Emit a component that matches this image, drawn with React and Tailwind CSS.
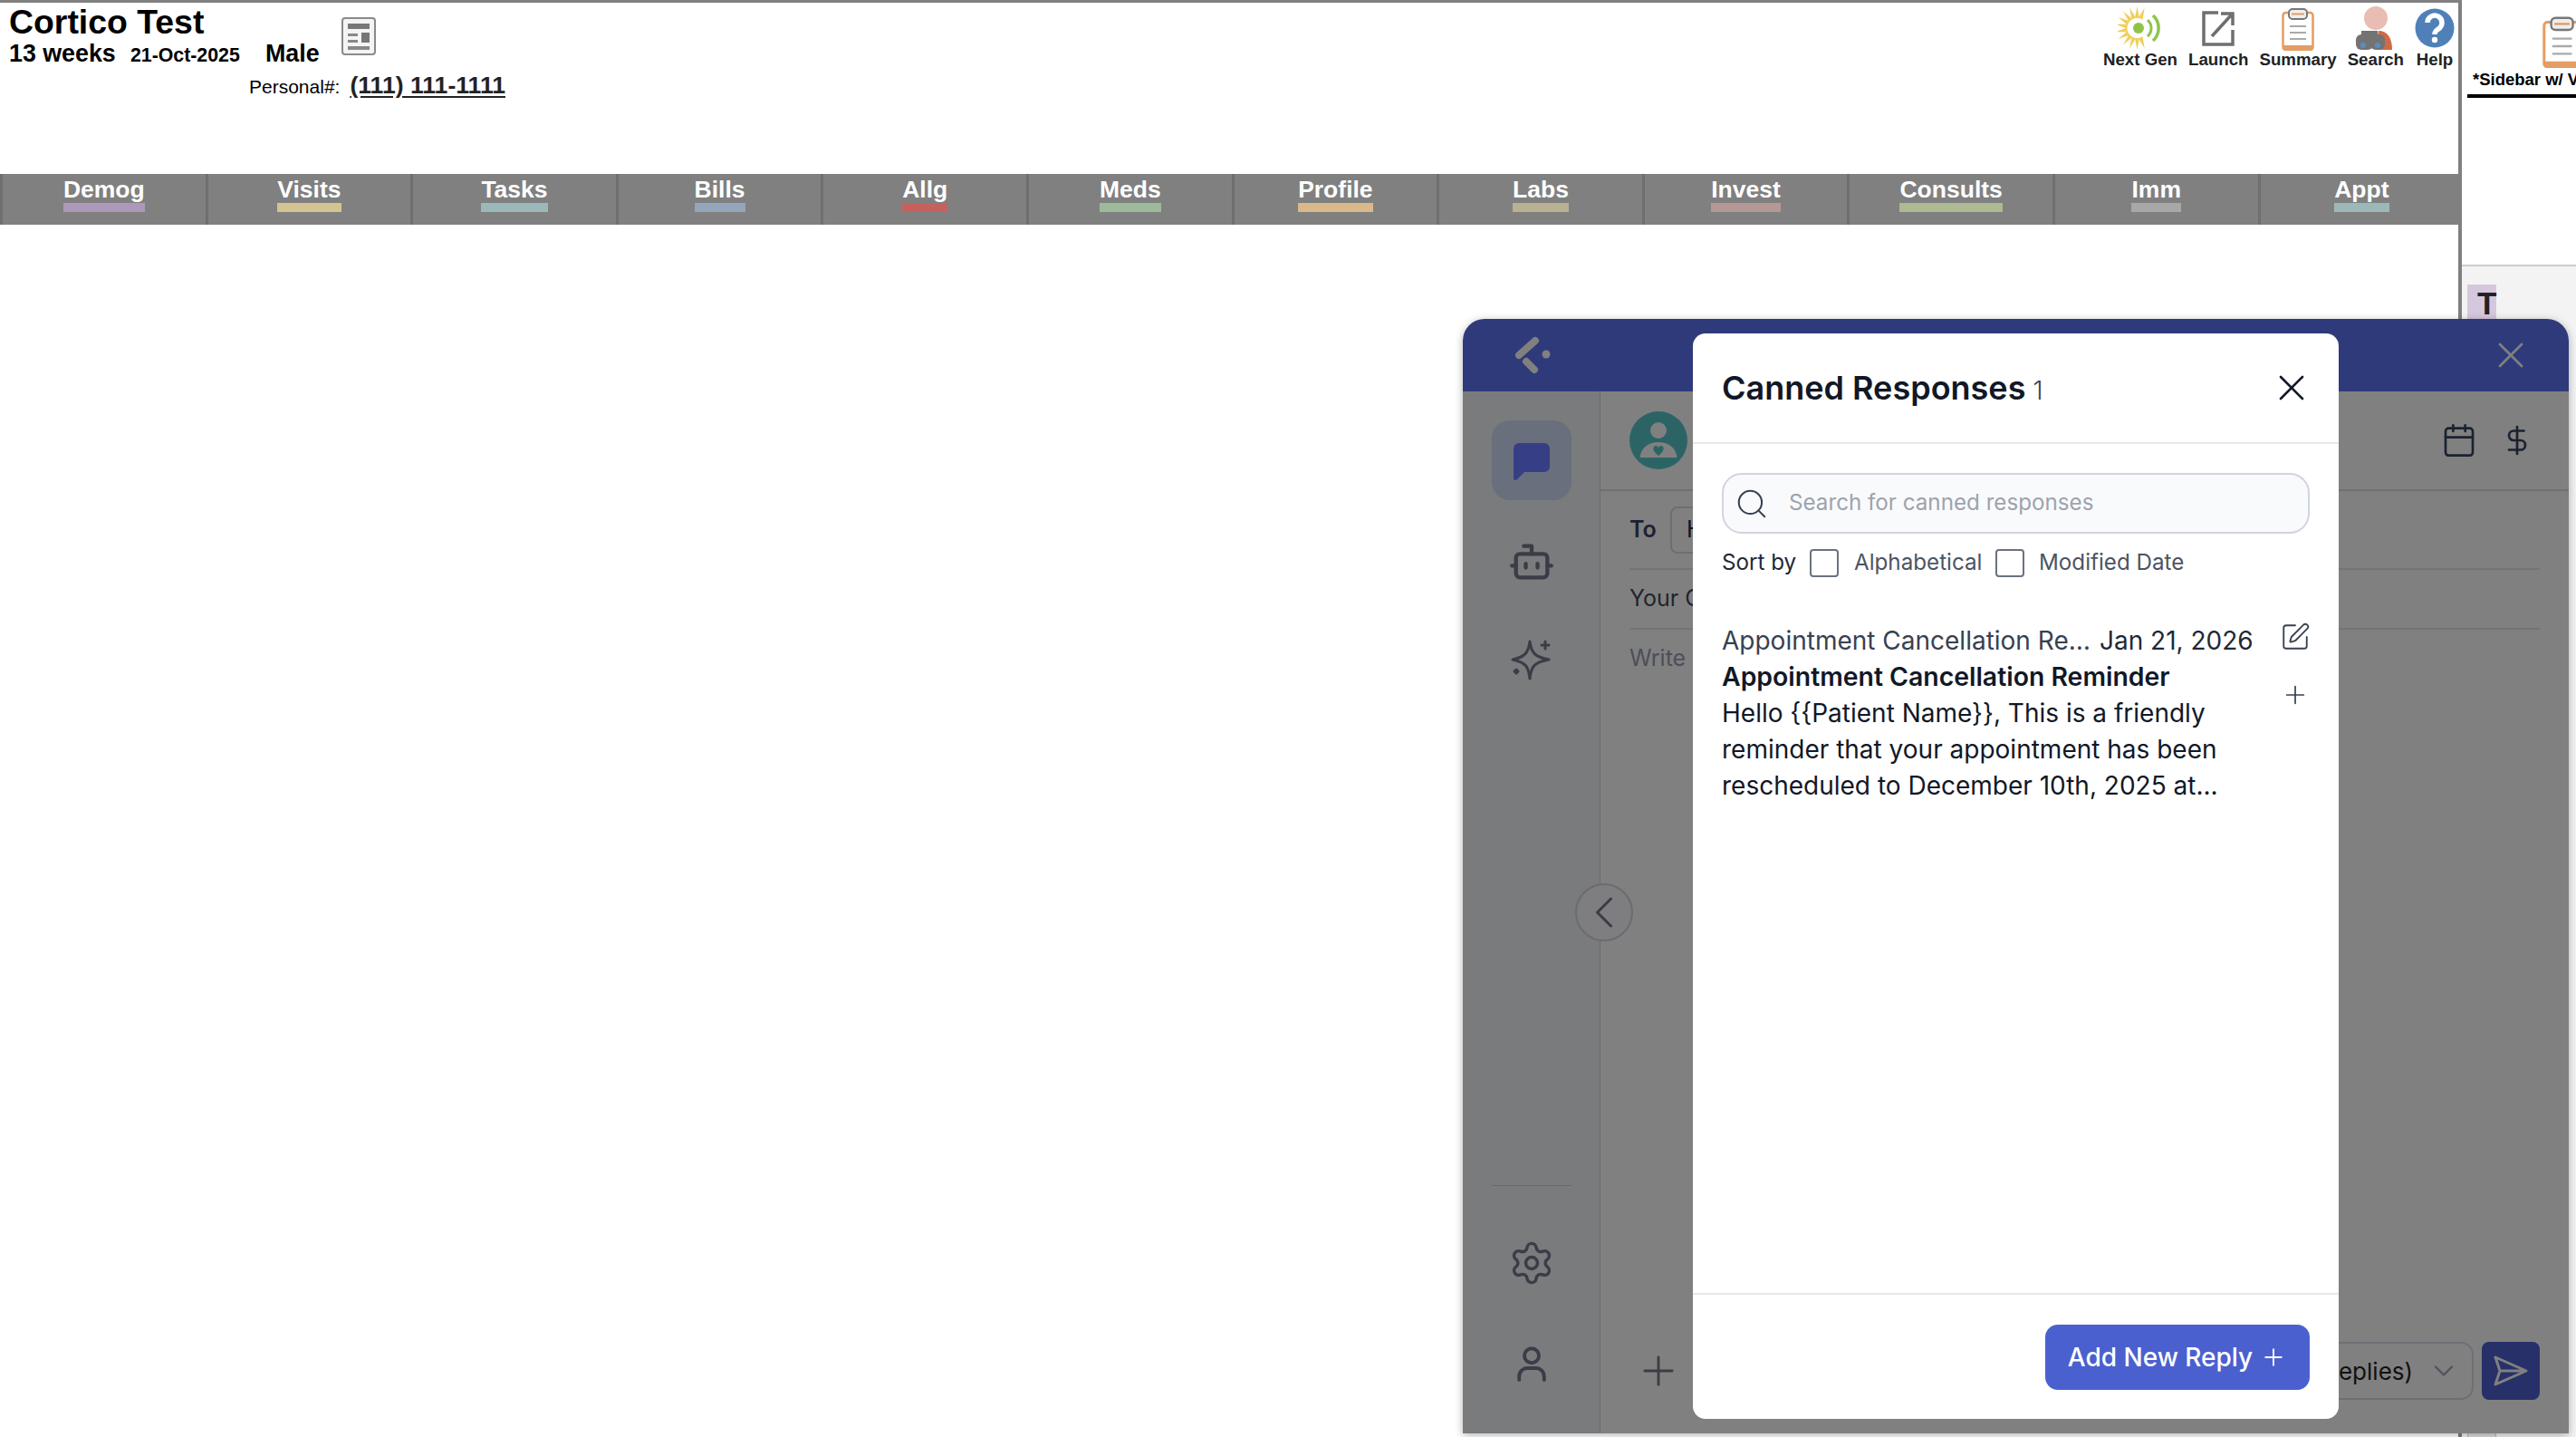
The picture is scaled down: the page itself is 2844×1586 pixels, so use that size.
import { Bot, Calendar, ChevronDown, ChevronLeft, DollarSign, Plus, Search, Settings, SquarePen, X } from 'lucide-react'

const tabs = [
  ['Demog', 'border-[#ad98bb]'],
  ['Visits', 'border-[#d4c393]'],
  ['Tasks', 'border-[#9cb9b9]'],
  ['Bills', 'border-[#95a5bb]'],
  ['Allg', 'border-[#c4625f]'],
  ['Meds', 'border-[#9dbb9b]'],
  ['Profile', 'border-[#d9b88a]'],
  ['Labs', 'border-[#b9b193]'],
  ['Invest', 'border-[#b59895]'],
  ['Consults', 'border-[#adba94]'],
  ['Imm', 'border-[#a8a8a8]'],
  ['Appt', 'border-[#9cb9b9]'],
]

function NextGenIcon() {
  const petals = [20, 0, -20, -40, -60, -80, -100, -120, -140, -160, -180, -200]
  return (
    <svg width="50" height="50" viewBox="0 0 50 50" className="blur-[0.4px]">
      {petals.map((a) => (
        <path key={a} d="M21.5 1 L24 14 H19 Z" fill="#f0cf5c" transform={`rotate(${a} 21.5 25)`} />
      ))}
      <circle cx="23" cy="25" r="6" fill="#8fc44a" />
      <path d="M33 16 a12 12 0 0 1 0 18" fill="none" stroke="#8fc44a" strokeWidth="3" />
      <path d="M39 11 a19 19 0 0 1 0 28" fill="none" stroke="#8fc44a" strokeWidth="3.5" />
    </svg>
  )
}

function LaunchIcon() {
  return (
    <svg width="50" height="50" viewBox="0 0 50 50" className="blur-[0.4px]">
      <path d="M25 8 H9 V43 H41 V27" fill="none" stroke="#6f6f6f" strokeWidth="3.5" />
      <path d="M18 34 L39 11 M28 9 H41 V22" fill="none" stroke="#6f6f6f" strokeWidth="3.5" />
    </svg>
  )
}

function ClipboardIcon({ size = 50 }) {
  return (
    <svg width={size * 0.72} height={size} viewBox="0 0 36 50" className="shrink-0 blur-[0.4px]">
      <rect x="1.5" y="8" width="33" height="41" rx="3" fill="#fff" stroke="#e49d63" strokeWidth="2.5" />
      <path d="M2 44 h32 v3 a2 2 0 0 1-2 2 H4 a2 2 0 0 1-2-2 z" fill="#e49d63" />
      <rect x="8" y="4" width="20" height="11" rx="4" fill="#eeeeee" stroke="#777" strokeWidth="2" />
      <rect x="11" y="8.5" width="14" height="2" fill="#e49d63" />
      <path d="M9 23 H27 M9 30 H27 M9 37 H27" stroke="#aaa" strokeWidth="2" />
    </svg>
  )
}

function SearchPersonIcon() {
  return (
    <svg width="50" height="50" viewBox="0 0 50 50" className="blur-[0.4px]">
      <circle cx="25" cy="14" r="13" fill="#e9bdb3" />
      <path d="M28 28 c10 0 15 8 15 21 H24 z" fill="#cf6a44" />
      <rect x="3" y="32" width="19" height="17" rx="6" fill="#737373" />
      <rect x="19" y="32" width="16" height="17" rx="6" fill="#737373" />
      <rect x="9" y="28" width="18" height="8" fill="#737373" />
      <circle cx="11" cy="44" r="3" fill="#5d8dc0" />
      <circle cx="27" cy="44" r="3" fill="#5d8dc0" />
    </svg>
  )
}

function HelpIcon() {
  return (
    <svg width="44" height="50" viewBox="0 0 44 50" className="blur-[0.4px]">
      <circle cx="22" cy="25" r="21.5" fill="#4f81b8" />
      <path d="M14 19 a8 8 0 1 1 12 7 c-3 2-4 3-4 6" fill="none" stroke="#fff" strokeWidth="5.5" />
      <circle cx="22" cy="38" r="3.2" fill="#fff" />
    </svg>
  )
}

function TopAction({ icon, label }) {
  return (
    <div className="flex flex-col items-center">
      <div className="flex h-[50px] items-center justify-center">{icon}</div>
      <span className="mt-[-1px] text-[18.7px] leading-[21px] font-bold text-[#222]">{label}</span>
    </div>
  )
}

function PatientHeader() {
  return (
    <div className="flex h-[189px] justify-between">
      <div className="pl-[10px]">
        <div className="flex">
          <div>
            <h1 className="mt-[3px] text-[37.4px] leading-[36px] font-bold text-black">Cortico Test</h1>
            <div className="mt-[2px] flex items-baseline text-black">
              <span className="w-[134px] text-[26.8px] leading-[30px] font-bold">13 weeks</span>
              <span className="w-[149px] text-[21.3px] font-bold">21-Oct-2025</span>
              <span className="text-[26.8px] leading-[30px] font-bold">Male</span>
            </div>
          </div>
          <svg width="38" height="42" viewBox="0 0 38 42" className="mt-[16px] ml-[24px] blur-[0.4px]">
            <rect x="1" y="1" width="36" height="40" rx="3" fill="#f4f4f4" stroke="#8a8a8a" strokeWidth="2" />
            <path d="M7 7 H31 V13 H7 Z M22 17 H31 V28 H22 Z" fill="#777" />
            <path d="M7 18 H18 V21 H7 Z M7 25 H18 V28 H7 Z M7 32 H31 V36 H7 Z" fill="#888" />
          </svg>
        </div>
        <div className="mt-[3px] ml-[265px] flex items-baseline gap-[11px] text-black">
          <span className="text-[21px] leading-[26px]">Personal#:</span>
          <span className="text-[26.6px] leading-[26px] font-bold text-[#222] underline underline-offset-[3px]">(111) 111-1111</span>
        </div>
      </div>
      <div className="mt-[3px] mr-[4px] flex gap-[12px] self-start">
        <TopAction icon={<NextGenIcon />} label="Next Gen" />
        <TopAction icon={<LaunchIcon />} label="Launch" />
        <TopAction icon={<ClipboardIcon />} label="Summary" />
        <TopAction icon={<SearchPersonIcon />} label="Search" />
        <TopAction icon={<HelpIcon />} label="Help" />
      </div>
    </div>
  )
}

function TabBar() {
  return (
    <div className="grid h-[56px] grid-cols-[repeat(12,226.6px)] overflow-hidden bg-[#808080]">
      {tabs.map(([label, color]) => (
        <div key={label} className="border-l-[3px] border-[#6f6f6f] pt-[3px] text-center">
          <span className={`inline-block border-b-[10px] text-[26.5px] leading-[29px] font-bold text-white ${color}`}>{label}</span>
        </div>
      ))}
    </div>
  )
}

function SidePanel() {
  return (
    <div className="flex h-full w-[126px] flex-col">
      <div className="h-[292px] shrink-0 pt-[77px] pl-[6px]">
        <div className="border-b-4 border-black pb-[5px] pl-[6px] text-[18.5px] leading-[22px] font-bold whitespace-nowrap text-black">*Sidebar w/ Video</div>
      </div>
      <div className="flex flex-1 flex-col justify-between border-t-2 border-[#cccccc] bg-[#f3f3f3] pt-[20px] pl-[6px]">
        <div className="h-[38px] w-[32px] bg-[#d5c8de] pt-[5px] pl-[11px] text-[35px] leading-[32px] font-bold text-[#222]">T</div>
        <div className="h-[4px] w-[32px] border-x border-[#c9b98c] bg-[#dddddd]"></div>
      </div>
    </div>
  )
}

function ChatSidebar() {
  return (
    <div className="flex w-[152px] shrink-0 flex-col items-center border-r border-[#6a6b70] bg-[#7a7b7d]">
      <div className="mt-[32px] flex h-[88px] w-[88px] items-center justify-center rounded-[20px] bg-[#6a6f7d]">
        <svg width="40" height="42" viewBox="0 0 40 42" className="mt-[4px]">
          <path d="M6 0 H34 a6 6 0 0 1 6 6 V26 a6 6 0 0 1-6 6 H12 L4 40 c-2 2-4 1-4-1 V6 a6 6 0 0 1 6-6 z" fill="#363f85" />
        </svg>
      </div>
      <Bot size={52} strokeWidth={2} className="mt-[42px] text-[#3a3d47]" />
      <svg width="46" height="46" viewBox="0 0 46 46" fill="none" stroke="#3a3d47" strokeWidth="3" strokeLinejoin="round" strokeLinecap="round" className="mt-[59px]">
        <path d="M21 3 C22.5 15 26 20 42 23 C26 26 22.5 30 21 44 C19.5 30 16 26 2 23 C16 20 19.5 15 21 3 Z" />
        <path d="M38 3 V11 M34 7 H42" />
        <path d="M6 34 L8 36 L6 38 L4 36 Z" fill="#3a3d47" />
      </svg>
      <div className="mt-auto mb-[59px] h-px w-[88px] bg-[#68696d]"></div>
      <Settings size={52} strokeWidth={1.6} className="mb-[66px] text-[#3a3d47]" />
      <svg width="32" height="40" viewBox="0 0 36 44" fill="none" stroke="#3a3d47" strokeWidth="4.4" strokeLinecap="round" className="mb-[56px]">
        <circle cx="18" cy="11" r="9" />
        <path d="M2.5 41 V37 C2.5 30 8 26.5 12 26.5 H24 C28 26.5 33.5 30 33.5 37 V41" />
      </svg>
    </div>
  )
}

function ChatPane() {
  return (
    <div className="flex min-w-0 flex-1 flex-col bg-[#808080] px-[32px] pb-[37px]">
      <div className="-mx-[32px] flex h-[110px] shrink-0 items-center justify-between border-b-2 border-[#6f7074] pr-[39px] pl-[32px]">
        <svg width="64" height="64" viewBox="0 0 64 64">
          <circle cx="32" cy="32" r="32" fill="#2c6466" />
          <circle cx="32" cy="21" r="9" fill="#808080" />
          <path d="M11.5 51 C13 39 22 34 32 34 S51 39 52.5 51 Z" fill="#808080" />
          <path d="M32 49 C24 43 26 38 29 38 C30.5 38 32 39 32 40.5 C32 39 33.5 38 35 38 C38 38 40 43 32 49 Z" fill="#2c6466" />
        </svg>
        <div className="flex items-center gap-[26px] text-[#1b2230]">
          <Calendar size={40} strokeWidth={1.6} />
          <DollarSign size={36} strokeWidth={1.8} />
        </div>
      </div>
      <div className="flex h-[87px] shrink-0 items-center border-b-2 border-[#737477]">
        <span className="w-[45px] text-[25px] font-semibold text-[#1b2230]">To</span>
        <div className="flex h-[52px] w-[300px] items-center rounded-[8px] border-2 border-[#6b6f75] pl-[16px] text-[25px] text-[#101319]">Hello</div>
      </div>
      <div className="flex h-[66px] shrink-0 items-center border-b-2 border-[#737477] text-[25px] text-[#20242e]">Your Cortico Number</div>
      <div className="pt-[15px] text-[25px] leading-[32px] text-[#4b4f59]">Write a message</div>
      <div className="mt-auto flex items-center">
        <Plus size={52} strokeWidth={1.3} className="ml-[6px] text-[#3a3d47]" />
        <div className="ml-auto flex h-[64px] w-[400px] items-center justify-end rounded-[14px] border-2 border-[#6c7076] pr-[13px] text-[26px] text-[#111]">
          (Canned Replies)
          <ChevronDown size={36} strokeWidth={1.5} className="ml-[16px] text-[#4f545c]" />
        </div>
        <button className="ml-[9px] flex h-[64px] w-[64px] items-center justify-center rounded-[8px] bg-[#273069]">
          <svg width="38" height="34" viewBox="0 0 38 34" fill="none" stroke="#808080" strokeWidth="3" strokeLinejoin="round">
            <path d="M2 2 L36 17 L2 32 L7 17 Z M7 17 H36" />
          </svg>
        </button>
      </div>
    </div>
  )
}

function ChatWindow() {
  return (
    <div className="absolute top-[352px] left-[1615px] flex h-[1230px] w-[1221px] flex-col overflow-hidden rounded-t-[24px] font-[Inter,sans-serif] shadow-[0_2px_10px_rgba(0,0,0,0.3)]">
      <div className="flex h-[80px] shrink-0 items-center justify-between bg-[#2f3a7b] pr-[40px] pl-[56px]">
        <svg width="42" height="42" viewBox="0 0 42 42" fill="none" stroke="#808080" strokeWidth="8" strokeLinecap="round">
          <path d="M24 5 L6 21 M14 28 L23 37" />
          <circle cx="36" cy="20" r="4.5" fill="#808080" stroke="none" />
        </svg>
        <X size={48} strokeWidth={1.4} className="text-[#808080]" />
      </div>
      <div className="relative flex min-h-0 flex-1">
        <ChatSidebar />
        <ChatPane />
        <div className="absolute top-[543px] left-[124px] flex h-[64px] w-[64px] items-center justify-center rounded-full border-2 border-[#6b6c70] bg-[#7e7e80]">
          <ChevronLeft size={60} strokeWidth={1.2} className="text-[#3a3d47]" />
        </div>
      </div>
    </div>
  )
}

function CannedResponsesModal() {
  return (
    <div className="absolute top-[368px] left-[1869px] flex h-[1198px] w-[713px] flex-col rounded-[14px] bg-white font-[Inter,sans-serif]">
      <div className="flex h-[122px] shrink-0 items-center justify-between border-b-2 border-[#e7e7ee] pr-[28px] pl-[32px]">
        <h2 className="flex items-baseline gap-[8px] text-[36px] font-semibold text-[#111827]">
          Canned Responses
          <span className="text-[28px] font-light text-[#374151]">1</span>
        </h2>
        <X size={48} strokeWidth={1.3} className="text-[#111827]" />
      </div>
      <div className="flex min-h-0 flex-1 flex-col px-[32px] pt-[32px]">
        <div className="flex h-[67px] shrink-0 items-center rounded-[22px] border-2 border-[#d1d5db] bg-[#f9fafb] pl-[12px]">
          <Search size={38} strokeWidth={1.3} className="shrink-0 text-[#374151]" />
          <input
            placeholder="Search for canned responses"
            className="ml-[22px] w-full bg-transparent text-[24.2px] outline-none placeholder:text-[#9ca3af]"
          />
        </div>
        <div className="mt-[17px] flex h-[31px] shrink-0 items-center text-[24.2px]">
          <span className="w-[97px] text-[#1f2937]">Sort by</span>
          <span className="h-[31px] w-[32px] rounded-[4px] border-2 border-[#6b7280]"></span>
          <span className="ml-[17px] w-[139px] text-[#4b5563]">Alphabetical</span>
          <span className="ml-[17px] h-[31px] w-[32px] rounded-[4px] border-2 border-[#6b7280]"></span>
          <span className="ml-[16px] text-[#4b5563]">Modified Date</span>
        </div>
        <div className="mt-[50px] flex justify-between">
          <div className="w-[590px] text-[28px] leading-[40px] text-[#111827]">
            <div className="flex">
              <span className="w-[417px] truncate text-[#374151]">Appointment Cancellation Reminder</span>
              <span className="whitespace-nowrap text-[#1f2937]">Jan 21, 2026</span>
            </div>
            <div className="text-[28.4px] font-semibold">Appointment Cancellation Reminder</div>
            <div className="w-[570px]">Hello {'{{'}Patient Name{'}}'}, This is a friendly reminder that your appointment has been rescheduled to December 10th, 2025 at...</div>
          </div>
          <div className="mr-[-1px] flex w-[34px] flex-col items-center text-[#374151]">
            <SquarePen size={34} strokeWidth={1.3} className="mt-[-1px]" />
            <Plus size={32} strokeWidth={1.3} className="mt-[31px]" />
          </div>
        </div>
      </div>
      <div className="flex h-[139px] shrink-0 items-start justify-end border-t-2 border-[#e7e7ee] px-[32px] pt-[33px]">
        <button className="flex h-[72px] w-[292px] items-center justify-center gap-[8px] rounded-[14px] bg-[#4b60cf] text-[28px] font-medium text-white">
          Add New Reply
          <Plus size={30} strokeWidth={1.5} />
        </button>
      </div>
    </div>
  )
}

export default function App() {
  return (
    <div className="relative flex h-[1586px] w-[2844px] overflow-hidden bg-white font-['Liberation_Sans',Arial,sans-serif]">
      <div className="h-full w-[2718px] shrink-0 border-t-[3px] border-r-4 border-[#808080]">
        <PatientHeader />
        <TabBar />
      </div>
      <SidePanel />
      <div className="absolute top-[15px] left-[2807px]">
        <ClipboardIcon size={60} />
      </div>
      <ChatWindow />
      <CannedResponsesModal />
    </div>
  )
}
